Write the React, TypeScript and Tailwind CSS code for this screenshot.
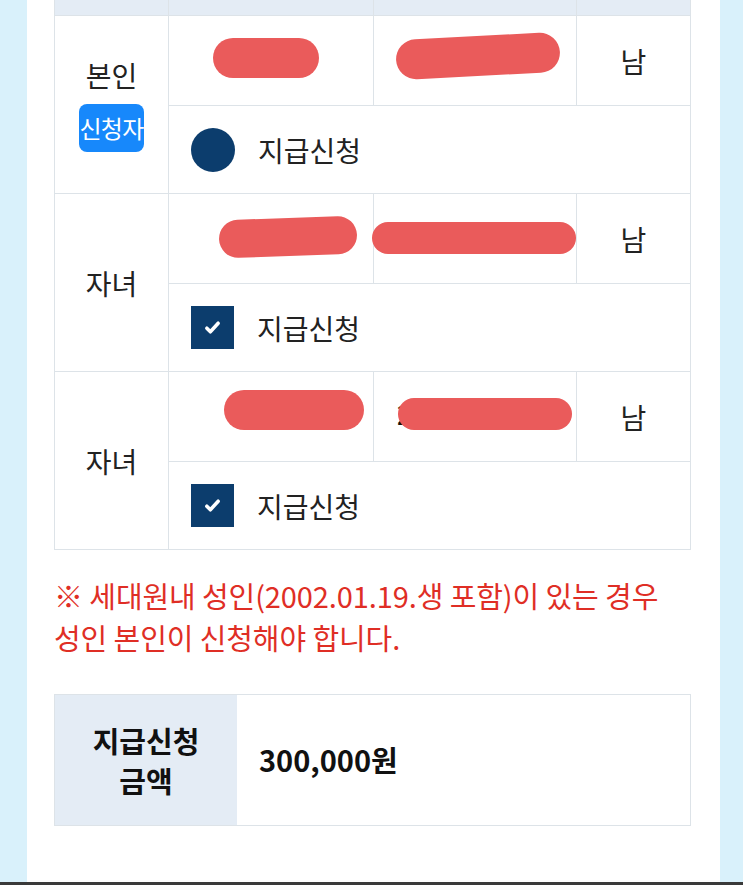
const font = { fontFamily: '"Noto Sans CJK KR", "Noto Sans", sans-serif' };

type Member = {
  relation: string;
  applicant?: boolean;
  kind: "radio" | "check";
  blobs: [string, string];
  peek?: string;
};

const members: Member[] = [
  {
    relation: "본인",
    applicant: true,
    kind: "radio",
    blobs: ["left-[44px] top-[22px] w-[106px] h-[40px]", "left-[22px] top-[20px] w-[164px] h-[40px] -rotate-3"],
  },
  {
    relation: "자녀",
    kind: "check",
    blobs: ["left-[50px] top-[24px] w-[138px] h-[38px] -rotate-2", "left-[-2px] top-[28px] w-[204px] h-[32px]"],
  },
  {
    relation: "자녀",
    kind: "check",
    blobs: ["left-[55px] top-[18px] w-[140px] h-[40px]", "left-[24px] top-[26px] w-[174px] h-[32px]"],
    peek: "2",
  },
];

function Blob({ cls }: { cls: string }) {
  return <div className={`absolute rounded-full bg-[#ea5b5b] ${cls}`} />;
}

function MemberRows({ m }: { m: Member }) {
  return (
    <>
      <div className="row-span-2 flex flex-col items-center justify-center gap-[12px] border-b border-r border-[#dde3e8] text-[28px] text-[#222]">
        <span className="leading-[34px]">{m.relation}</span>
        {m.applicant && (
          <span className="rounded-[8px] bg-[#1788fb] px-[1px] py-[6px] text-[24px] leading-[36px] tracking-[-0.8px] text-white">
            신청자
          </span>
        )}
      </div>
      <div className="relative h-[90px] border-b border-r border-[#dde3e8]">
        <Blob cls={m.blobs[0]} />
      </div>
      <div className="relative h-[90px] border-b border-r border-[#dde3e8]">
        {m.peek && (
          <span className="absolute left-[23px] top-[22px] text-[27px] font-bold text-[#111]">{m.peek}</span>
        )}
        <Blob cls={m.blobs[1]} />
      </div>
      <div className="flex h-[90px] items-center justify-center border-b border-[#dde3e8] text-[28px] text-[#222]">
        남
      </div>
      <div className="col-span-3 flex h-[88px] items-center gap-[23px] border-b border-[#dde3e8] pl-[22px]">
        {m.kind === "radio" ? (
          <span className="h-[44px] w-[44px] rounded-full bg-[#0c3d6d]" />
        ) : (
          <span className="flex h-[43px] w-[43px] items-center justify-center bg-[#0c3d6d]">
            <svg viewBox="0 0 24 24" className="h-[17px] w-[17px]" fill="none" stroke="white" strokeWidth={5} strokeLinecap="round" strokeLinejoin="round">
              <path d="M4 13l5 5L20 6" />
            </svg>
          </span>
        )}
        <span className="text-[28px] text-[#222]">지급신청</span>
      </div>
    </>
  );
}

export default function App() {
  return (
    <div className="flex h-[885px] w-[743px] flex-col bg-[#d9f1fb]" style={font}>
      <div className="flex flex-1">
        <div className="w-[27px]" />
        <div className="flex-1 bg-white pl-[27px] pr-[29px]">
          <div className="grid grid-cols-[114px_205px_203px_1fr] border-l border-r border-[#dde3e8]">
            <div className="h-[16px] border-b border-r border-[#dde3e8] bg-[#e4ecf5]" />
            <div className="h-[16px] border-b border-r border-[#dde3e8] bg-[#e4ecf5]" />
            <div className="h-[16px] border-b border-r border-[#dde3e8] bg-[#e4ecf5]" />
            <div className="h-[16px] border-b border-[#dde3e8] bg-[#e4ecf5]" />
            {members.map((m, i) => (
              <MemberRows key={i} m={m} />
            ))}
          </div>

          <p className="mt-[24px] whitespace-nowrap text-[29px] leading-[42px] tracking-[-0.1px] text-[#df2e25]">
            ※ 세대원내 성인(2002.01.19.생 포함)이 있는 경우
            <br />
            성인 본인이 신청해야 합니다.
          </p>

          <div className="mt-[36px] flex h-[132px] border border-[#dde3e8]">
            <div className="flex w-[182px] flex-col items-center justify-center bg-[#e4ecf5] text-[29px] font-bold leading-[40px] text-[#111]">
              <span>지급신청</span>
              <span>금액</span>
            </div>
            <div className="flex flex-1 items-center pl-[22px] text-[29px] font-bold text-[#111]">
              300,000원
            </div>
          </div>
        </div>
        <div className="w-[23px]" />
      </div>
      <div className="h-[3px] bg-[#3a3a3a]" />
    </div>
  );
}
